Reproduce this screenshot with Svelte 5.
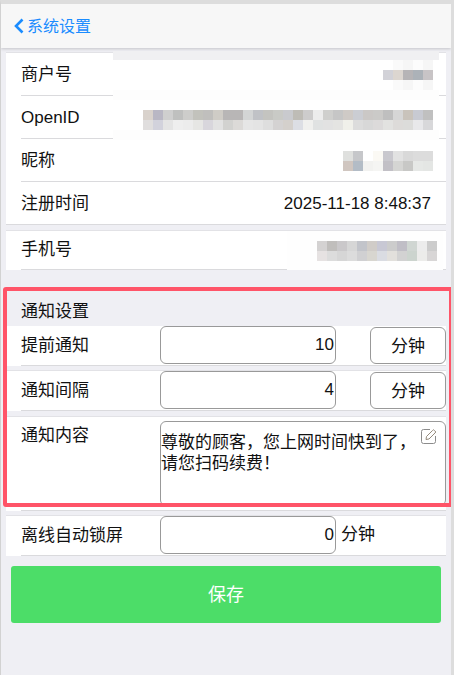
<script>
  const nick = [
    ['dfe0de', 'c6c7ca', 'ffffff', 'fbf9f4', 'c9c8ce', 'e2e2e2', 'd9d9d9', 'dcdcdc', 'dcdcdc'],
    ['d0c6c0', 'b3bcc6', 'f2f2f0', 'f5f5f3', 'c2c0c6', 'd5d5d3', 'c8c8c6', 'e6e8e6', 'e4e6e4']
  ];
  const merchant = [
    ['ffffff', 'fafafa', 'f6f6f6', 'fcfcfc', 'f6f6f6'],
    ['d2d2d8', 'dcd6d0', 'b6b4b6', 'acb2b8', 'c8c4c6'],
    ['ffffff', 'fafafa', 'f6f6f6', 'fcfcfc', 'f6f6f6']
  ];
  const openid = [
    ['d9d2cc', 'b9b7c4', 'cfcfcf', 'bfc0bf', 'cdcdcb', 'c2c2bc', 'c0bfbd', 'cfccc6', 'b8b6b6', 'b8b6b6', 'd3d5d5', 'c0c2c6', 'c4c4c0', 'c9cac6', 'c9cace', 'bebcb6', 'cdcccc', 'ececec', 'cfcfcd', 'c6c6c6', 'cfcac6', 'cbcdd3', 'cbc8c6', 'cbcac8', 'bfbfbf', 'd6d6d6', 'c9c3bb', 'c8cad2', 'c0c0c0'],
    ['e0dede', 'd2d2dc', 'e4e4e4', 'eeeeee', 'ececec', 'e6e6e4', 'd8d6dc', 'e2e2e2', 'd2d2d0', 'dcdad8', 'e6e6e6', 'e4e4e4', 'dedede', 'd4d2d2', 'd4d0cc', 'dcdee4', 'f0f0ee', 'e0e2e2', 'e2e2e2', 'e4e4e2', 'f0f0ea', 'dcdcdc', 'd8d8d8', 'dcdada', 'e2e2e0', 'dddbd9', 'dcdcda', 'e8e8ea', 'd8d8da']
  ];
  const phone = [
    ['d4d2d2', 'c0bebc', 'cac8ca', 'd6d6d6', 'c2c4ca', 'd0ccc8', 'c8c8d4', 'cccccc', 'c0bec6', 'd0d6d2', 'ececec', 'cccccc'],
    ['e6e2e2', 'dcdcdc', 'd6d6d6', 'dcdcdc', 'd0d0d2', 'd8d6d0', 'dadce2', 'e2e0dc', 'd2d2d2', 'ccd4ce', 'ececea', 'd8d6d6']
  ];
</script>

{#snippet mosaic(rows, cls = '')}
  <div class="mosaic {cls}">
    {#each rows as row}
      <div class="mosaic-row">
        {#each row as c}
          <span style="background:#{c}"></span>
        {/each}
      </div>
    {/each}
  </div>
{/snippet}

<div class="page">
  <header class="nav">
    <a class="back" href="#top">
      <svg width="10" height="16" viewBox="0 0 10 16"><path d="M8.5 1.5 2 8l6.5 6.5" fill="none" stroke="#1a8cff" stroke-width="2.6" /></svg>
      <span>系统设置</span>
    </a>
  </header>

  <section class="group first">
    <div class="row line">
      <span class="name">商户号</span>
      <div class="patch p1"></div>
      {@render mosaic(merchant, 'm-merchant')}
    </div>
    <div class="row line">
      <span class="name latin">OpenID</span>
      <div class="patch p2"></div>
      <div class="patch p2b"></div>
      {@render mosaic(openid, 'm-openid')}
    </div>
    <div class="row line">
      <span class="name">昵称</span>
      {@render mosaic(nick)}
    </div>
    <div class="row line full">
      <span class="name">注册时间</span>
      <div class="value">2025-11-18 8:48:37</div>
    </div>
  </section>

  <section class="group phone">
    <div class="row line">
      <span class="name up">手机号</span>
      <div class="patch p3"></div>
      {@render mosaic(phone, 'm-phone')}
    </div>
  </section>

  <div class="notify">
    <div class="section-title">通知设置</div>
    <section class="group plain">
      <div class="row line field">
        <span class="name">提前通知</span>
        <input value="10" />
        <button class="unit">分钟</button>
      </div>
    </section>
    <section class="group gap1">
      <div class="row line field">
        <span class="name">通知间隔</span>
        <input value="4" />
        <button class="unit">分钟</button>
      </div>
    </section>
    <section class="group gap2">
      <div class="row line area">
        <span class="name">通知内容</span>
        <div class="area-box">
          <textarea>尊敬的顾客，您上网时间快到了，请您扫码续费！</textarea>
          <svg class="edit" width="16" height="15" viewBox="0 0 16 15" fill="none" stroke="#8c8c8c" stroke-width="1">
            <path d="M14.5 7v5.5a2 2 0 0 1-2 2h-10a2 2 0 0 1-2-2v-10a2 2 0 0 1 2-2H9" />
            <path d="M5.5 7.5 11.5 1.5a1.2 1.2 0 0 1 2 0l.5.5a1.2 1.2 0 0 1 0 2l-6 6-3 .5z" stroke="#948a7c" />
          </svg>
        </div>
      </div>
    </section>
    <div class="frame"></div>
  </div>

  <section class="group gap1">
    <div class="row line field">
      <span class="name">离线自动锁屏</span>
      <input value="0" />
      <span class="suffix">分钟</span>
    </div>
  </section>

  <button class="save">保存</button>
</div>

<style>
  :global(body) {
    margin: 0;
    background: #efeff4;
  }

  .page {
    box-sizing: border-box;
    height: 675px;
    overflow: hidden;
    border-top: 4px solid #dddddd;
    border-left: 1px solid #d2d2d2;
    border-right: 3px solid #dddddd;
    background: #efeff4;
    font-family: "Liberation Sans", "Noto Sans CJK SC", sans-serif;
    font-size: 17px;
    color: #111;
  }

  .nav {
    height: 44px;
    display: flex;
    align-items: center;
    padding-left: 13px;
    background: #f7f7f7;
    box-shadow: 0 1px 3px rgba(0, 0, 0, 0.18);
    position: relative;
  }

  .back {
    display: flex;
    align-items: center;
    gap: 3px;
    color: #1a8cff;
    text-decoration: none;
    font-size: 16px;
  }

  .back span {
    padding-bottom: 2px;
  }

  .group {
    margin: 0 5px;
    background: #fff;
    box-shadow: 0 -1px 0 #e2e2e6;
  }

  .first {
    margin-top: 5px;
  }

  .phone {
    margin-top: 6px;
  }

  .gap1 {
    margin-top: 5px;
  }

  .gap2 {
    margin-top: 6px;
  }

  .plain {
    box-shadow: none;
  }

  .row {
    position: relative;
    display: flex;
    align-items: center;
    height: 43px;
    padding-left: 15px;
  }

  .line::after {
    content: "";
    position: absolute;
    left: 15px;
    right: 0;
    bottom: 0;
    height: 1px;
    background: #dadadd;
  }

  .full::after {
    left: 0;
  }

  .phone .row {
    height: 39px;
  }

  .name {
    flex: none;
    width: 139px;
    padding-bottom: 5px;
  }

  .first .name {
    width: auto;
  }

  .first .latin {
    padding-bottom: 0;
  }

  .up {
    padding-bottom: 7px;
  }

  .value {
    margin-left: auto;
    padding-right: 15px;
  }

  .mosaic {
    position: relative;
    z-index: 2;
    margin-left: auto;
    margin-right: 13px;
  }

  .m-merchant {
    margin-top: 1px;
  }

  .m-openid {
    margin-top: 5px;
  }

  .m-phone {
    margin-right: 9px;
    margin-top: 1px;
  }

  .mosaic-row {
    display: flex;
    justify-content: flex-end;
  }

  .mosaic-row span {
    flex: none;
    width: 10px;
    height: 10px;
  }

  .patch {
    position: absolute;
    z-index: 1;
    background: #fdfdfd;
  }

  .p1 {
    left: 107px;
    right: 7px;
    top: -2px;
    height: 9px;
    background: #f0f0f2;
  }

  .p2 {
    left: 107px;
    right: 7px;
    top: -6px;
    height: 10px;
  }

  .p2b {
    left: 107px;
    right: 7px;
    top: 34px;
    height: 10px;
  }

  .p3 {
    left: 281px;
    right: 3px;
    top: 0;
    bottom: 0;
    background: #fefefe;
  }

  .notify {
    position: relative;
    margin-top: 21px;
  }

  .section-title {
    height: 35px;
    line-height: 41px;
    padding-left: 20px;
  }

  .field {
    height: 40px;
    align-items: flex-start;
  }

  .field .name {
    padding: 10px 0 0;
    line-height: 20px;
  }

  .field input,
  .unit {
    box-sizing: border-box;
    height: 38px;
    border: 1px solid #999;
    border-radius: 6px;
    background: #fff;
    font: inherit;
    color: #111;
  }

  .field input {
    flex: none;
    width: 176px;
    padding: 0 1px 0 0;
    text-align: right;
    outline: none;
  }

  .unit {
    width: 76px;
    height: 37px;
    margin: 1px 0 0 34px;
    padding: 0 0 2px;
  }

  .suffix {
    margin-left: 5px;
    line-height: 37px;
  }

  .area {
    height: 94px;
    align-items: flex-start;
  }

  .area .name {
    padding: 8px 0 0;
    line-height: 22px;
  }

  .area-box {
    position: relative;
    margin-top: 4px;
    width: 286px;
    height: 85px;
  }

  textarea {
    box-sizing: border-box;
    display: block;
    width: 100%;
    height: 100%;
    padding: 10px 14px 0 0;
    border: 1px solid #999;
    border-radius: 6px;
    background: #fff;
    font: inherit;
    line-height: 21px;
    color: #111;
    resize: none;
    outline: none;
  }

  .edit {
    position: absolute;
    top: 8px;
    right: 9px;
  }

  .frame {
    position: absolute;
    z-index: 5;
    box-sizing: border-box;
    left: 2px;
    right: -2px;
    top: -4px;
    height: 220px;
    border: 4px solid #ff5468;
    border-radius: 3px;
    pointer-events: none;
  }

  .save {
    display: block;
    width: 430px;
    height: 57px;
    margin: 10px 0 0 10px;
    padding: 0 0 4px;
    border: none;
    border-radius: 3px;
    background: #4cdd68;
    color: #fff;
    font: inherit;
    font-size: 18px;
  }
</style>
